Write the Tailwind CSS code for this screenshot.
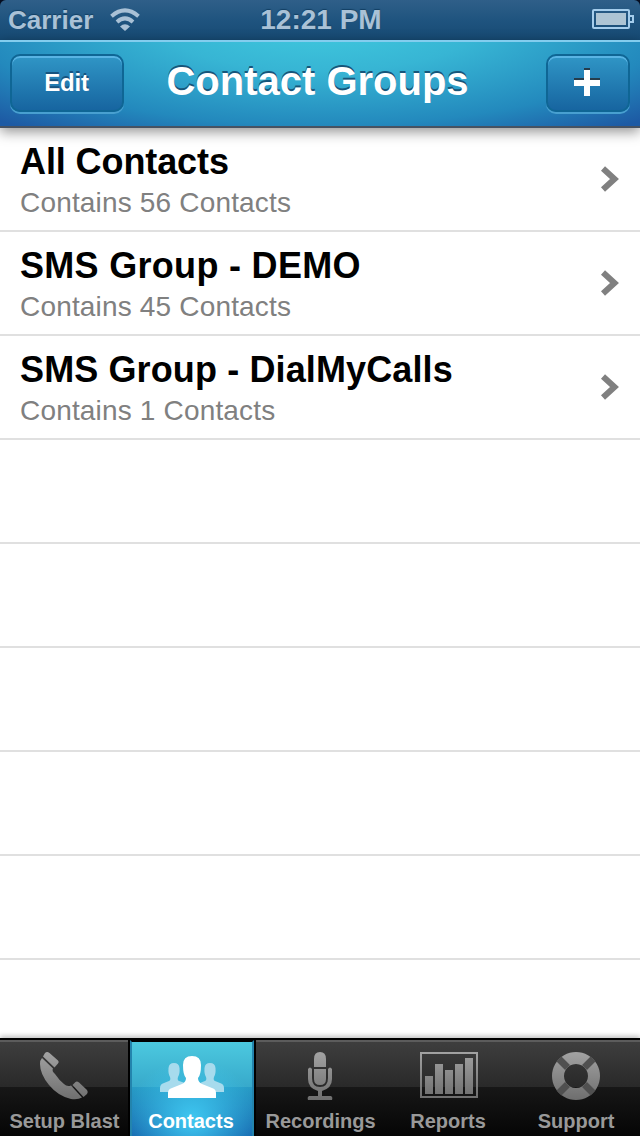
<!DOCTYPE html>
<html lang="en">
<head>
<meta charset="utf-8">
<title>Contact Groups</title>
<script src="https://cdn.jsdelivr.net/npm/@tailwindcss/browser@4"></script>
</head>
<body class="bg-black">
<div class="w-[640px] h-[1136px] flex flex-col overflow-hidden bg-white font-['Liberation_Sans',Arial,sans-serif]">
  <div class="h-10 shrink-0 bg-[#050d20]">
    <div class="h-full rounded-t-[6px] bg-linear-to-b from-[#2f5f89] via-[#1f547f] to-[#164a73] grid grid-cols-3 items-center text-[#a9c1d6] font-bold">
      <div class="flex items-center pl-2">
        <span class="text-[26px] leading-10 w-[101px] [text-shadow:0_-1px_1px_#123f63]">Carrier</span>
        <svg class="w-8 h-6" viewBox="0 0 32 24" fill="none" stroke="#a9c1d6" stroke-width="4"><path d="M2.500 8.200Q16 -3.400 29.500 8.200"/><path d="M8 14Q16 6.800 24 14"/><path d="M16 23L11 18.600Q16 14 21 18.600Z" fill="#a9c1d6" stroke="none"/></svg>
      </div>
      <span class="text-center text-[28px] leading-10 ml-0.5 [text-shadow:0_-1px_1px_#123f63]">12:21 PM</span>
      <svg class="w-[42px] h-5 justify-self-end mr-1.5 -mt-0.5" viewBox="0 0 42 20"><rect x="1" y="1" width="36" height="18" rx="1" fill="none" stroke="#a5cdec" stroke-width="2"/><rect x="4" y="4" width="30" height="12" fill="#adc4d4"/><path d="M38 7h3v6h-3" fill="none" stroke="#a5cdec" stroke-width="2"/></svg>
    </div>
  </div>
  <header class="relative z-10 h-[88px] shrink-0 border-t-2 border-[#83cdee] border-b-2 border-b-[#465262] shadow-[0_4px_12px_rgba(0,0,0,0.42)] bg-[radial-gradient(ellipse_460px_135px_at_50%_-18px,#40cadf_0%,#37b5d4_35%,#2389bd_75%,#1d5aa4_100%)] flex items-start justify-between px-2.5 pt-3 text-white font-bold">
    <div class="w-[114px] h-[58px] rounded-[10px] border-2 border-[#0f6695] bg-linear-to-b from-[#3096c6] to-[#1765a0] shadow-[0_2px_0_#48a0d0,inset_0_2px_0_#59b4e4] flex justify-center"><span class="text-[24px] leading-[54px] tracking-[-0.2px] -ml-px [text-shadow:0_-2px_0_#17537f]">Edit</span></div>
    <h1 class="text-[40px] leading-[54px] ml-[-35px] [text-shadow:0_-2px_0_#17567a]">Contact Groups</h1>
    <div class="w-[84px] h-[58px] rounded-[10px] border-2 border-[#0f6695] bg-linear-to-b from-[#3096c6] to-[#1765a0] shadow-[0_2px_0_#48a0d0,inset_0_2px_0_#59b4e4] flex justify-center pt-3"><svg class="w-[26px] h-7 -ml-0.5" viewBox="0 0 26 28"><path d="M10 0h6v10h10v6H0v-6h10z" fill="#263c4b"/><path d="M10 2h6v10h10v6H16v10h-6V18H0v-6h10z" fill="#fff"/></svg></div>
  </header>
  <main class="flex-1 overflow-hidden bg-white">
    <div class="h-[104px] border-b-2 border-[#e0e0e0] pl-5 pr-5 pt-3 flex justify-between"><div><div class="text-[36px] leading-[44px] font-bold text-black tracking-[-0.1px]">All Contacts</div><div class="mt-px text-[28px] leading-9 text-[#808080] tracking-[0.17px]">Contains 56 Contacts</div></div><svg class="w-5 h-7 mt-[25px]" viewBox="0 0 20 28"><path d="M3 3.500L14.500 14L3 24.500" fill="none" stroke="#808080" stroke-width="6"/></svg></div>
    <div class="h-[104px] border-b-2 border-[#e0e0e0] pl-5 pr-5 pt-3 flex justify-between"><div><div class="text-[36px] leading-[44px] font-bold text-black tracking-[0.3px]">SMS Group - DEMO</div><div class="mt-px text-[28px] leading-9 text-[#808080] tracking-[0.17px]">Contains 45 Contacts</div></div><svg class="w-5 h-7 mt-[25px]" viewBox="0 0 20 28"><path d="M3 3.500L14.500 14L3 24.500" fill="none" stroke="#808080" stroke-width="6"/></svg></div>
    <div class="h-[104px] border-b-2 border-[#e0e0e0] pl-5 pr-5 pt-3 flex justify-between"><div><div class="text-[36px] leading-[44px] font-bold text-black tracking-[0.12px]">SMS Group - DialMyCalls</div><div class="mt-px text-[28px] leading-9 text-[#808080] tracking-[0.17px]">Contains 1 Contacts</div></div><svg class="w-5 h-7 mt-[25px]" viewBox="0 0 20 28"><path d="M3 3.500L14.500 14L3 24.500" fill="none" stroke="#808080" stroke-width="6"/></svg></div>
    <div class="h-[104px] border-b-2 border-[#e0e0e0]"></div>
    <div class="h-[104px] border-b-2 border-[#e0e0e0]"></div>
    <div class="h-[104px] border-b-2 border-[#e0e0e0]"></div>
    <div class="h-[104px] border-b-2 border-[#e0e0e0]"></div>
    <div class="h-[104px] border-b-2 border-[#e0e0e0]"></div>
  </main>
  <svg class="absolute w-0 h-0"><defs><linearGradient id="g" gradientUnits="userSpaceOnUse" x1="0" y1="0" x2="0" y2="50"><stop offset="0" stop-color="#a5a5a5"/><stop offset="1" stop-color="#6e6e6e"/></linearGradient></defs></svg>
  <nav class="relative z-10 h-[98px] shrink-0 border-t-2 border-black shadow-[0_-2px_5px_rgba(0,0,0,0.25)] bg-[linear-gradient(#5c5c5c_0,#5c5c5c_2px,#3e3e3e_2px,#292929_47px,#171717_47px,#050505_96px)] flex text-[20px] leading-6 font-bold text-[#999]">
    <a class="w-[128px] flex flex-col items-center pt-2.5">
      <svg class="w-[52px] h-[52px] -ml-px" viewBox="0 0 52 52"><path d="M4 8L15 18.500Q13.500 21 17 24Q21 30 26 34Q29 37 33 35.500L44 47.500Q40 50 33 49Q20 46 11 35Q2 24 2 14Q2 10 4 8Z" fill="url(#g)"/><path d="M5 6.500L7 3Q9 1 11.500 3L20 10.500Q21.500 12 20 13.500L16.500 17.500Z" fill="url(#g)"/><path d="M34.500 35L37.500 32Q39 30.800 41 32.500L49 40Q50.500 42 49 44L45.500 47Z" fill="url(#g)"/></svg>
      <span class="mt-[7px] ml-px">Setup Blast</span>
    </a>
    <a class="w-[128px] border-x-2 border-black flex flex-col text-white">
      <div class="h-full border-x-2 border-t-2 border-[#2384ad] border-t-black bg-[radial-gradient(ellipse_66px_60px_at_50%_82%,rgba(65,205,245,0.95),rgba(65,205,245,0)),linear-gradient(#4cc9df_0,#37a9cb_45px,#289cc6_45px,#1769b0_94px)] flex flex-col items-center pt-3">
        <svg class="w-16 h-[46px]" viewBox="0 0 64 46"><g fill="#a7dbed"><path d="M0 38V34Q0 30 4 29L9 27Q11 26 10 23Q8 20 8.500 14Q9 9 14 9T19.500 14Q20 20 18 23Q17 26 19 27L25 29Q28 30 28 34V38Z"/><path d="M36 38V34Q36 30 40 29L45 27Q47 26 46 23Q44 20 44.500 14Q45 9 50 9T55.500 14Q56 20 54 23Q53 26 55 27L60 29Q64 30 64 34V38Z"/></g><path d="M8 44V39Q8 35 12 34L22 30Q26 28 26 24Q23 21 23 11Q23 2 32 2T41 11Q41 21 38 24Q38 28 42 30L52 34Q56 35 56 39V44Z" fill="#fff"/></svg>
        <span class="mt-[9px] -ml-0.5">Contacts</span>
      </div>
    </a>
    <a class="w-[129px] flex flex-col items-center pt-2.5">
      <svg class="w-[26px] h-[52px] -ml-0.5" viewBox="0 0 26 52"><path d="M7 17V9Q7 2 13 2T19 9V17Z" fill="url(#g)"/><path d="M7 19H19V29Q19 35 13 35T7 29Z" fill="url(#g)"/><path d="M1 19q2-3 4 0V28Q5 37 13 37T21 28V19q2-3 4 0V29Q25 38 15 41V46H24Q26 47 25 50H1Q0 47 2 46H11V41Q1 38 1 29Z" fill="url(#g)"/></svg>
      <span class="mt-[7px]">Recordings</span>
    </a>
    <a class="w-[126px] flex flex-col items-center pt-[9px]">
      <svg class="w-[58px] h-[52px] ml-[2px]" viewBox="0 0 58 52"><path fill-rule="evenodd" d="M0 3H58V49H0ZM2 5V47H56V5Z" fill="url(#g)"/><path d="M5 27h8v18H5zM15 15h8v30h-8zM25 21h8v24h-8zM35 15h8v30h-8zM45 9h8v36h-8z" fill="url(#g)"/></svg>
      <span class="mt-2">Reports</span>
    </a>
    <a class="w-[129px] flex flex-col items-center pt-2.5">
      <svg class="w-[52px] h-[52px]" viewBox="0 0 52 52"><path fill-rule="evenodd" d="M26 2a24 24 0 1 0 .01 0ZM26 14a12 12 0 1 1-.01 0Z" fill="url(#g)"/><path d="M9 9L17.500 17.500M43 9L34.500 17.500M9 43L17.500 34.500M43 43L34.500 34.500" stroke="#505050" stroke-width="7"/></svg>
      <span class="mt-[7px] ml-px">Support</span>
    </a>
  </nav>
</div>
</body>
</html>
